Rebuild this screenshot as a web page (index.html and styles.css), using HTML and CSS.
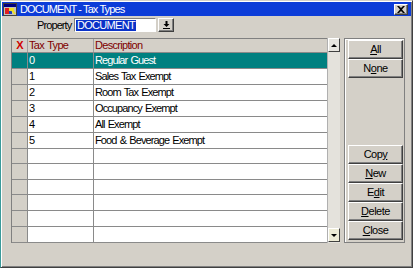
FILE: index.html
```html
<!DOCTYPE html>
<html>
<head>
<meta charset="utf-8">
<link rel="stylesheet" href="styles.css">
</head>
<body>
<div class="win">
  <div class="titlebar">
    <svg class="ticon" width="14" height="13" viewBox="0 0 14 13">
      <rect x="0.5" y="0.5" width="13" height="12" fill="#c0c0c0" stroke="#404040"/>
      <rect x="1" y="1" width="12" height="3" fill="#000080"/>
      <rect x="2" y="5" width="4" height="6" fill="#e02020"/>
      <rect x="6" y="5" width="5" height="3" fill="#f0e020"/>
      <rect x="6" y="8" width="3" height="3" fill="#2040c0"/>
      <path d="M8 6 L12 11" stroke="#f0e020" stroke-width="2"/>
    </svg>
    <span class="ttext">DOCUMENT - Tax Types</span>
    <span class="tclose"><svg width="8" height="7" viewBox="0 0 8 7"><path d="M0 0h2l2 2 2-2h2L5 3.5 8 7H6L4 5 2 7H0l3-3.5z" fill="#000"/></svg></span>
  </div>
  <div class="prop">
    <span class="plabel">Property</span>
    <span class="pinput"><span class="sel">DOCUMENT</span></span>
    <span class="pbtn"><svg width="7" height="8" viewBox="0 0 7 8"><path d="M2.5 0h2v3h2L3.5 6 0.5 3h2z" fill="#000"/><rect x="0" y="7" width="7" height="1" fill="#000"/></svg></span>
  </div>
  <div class="main">
    <div class="grid">
      <div class="row head"><div class="c0 xh">X</div><div class="c1">Tax Type</div><div class="c2">Description</div></div>
      <div class="row selrow"><div class="c0"></div><div class="c1">0</div><div class="c2">Regular Guest</div></div>
      <div class="row"><div class="c0"></div><div class="c1">1</div><div class="c2">Sales Tax Exempt</div></div>
      <div class="row"><div class="c0"></div><div class="c1">2</div><div class="c2">Room Tax Exempt</div></div>
      <div class="row"><div class="c0"></div><div class="c1">3</div><div class="c2">Occupancy Exempt</div></div>
      <div class="row"><div class="c0"></div><div class="c1">4</div><div class="c2">All Exempt</div></div>
      <div class="row"><div class="c0"></div><div class="c1">5</div><div class="c2">Food &amp; Beverage Exempt</div></div>
      <div class="row short"><div class="c0"></div><div class="c1"></div><div class="c2"></div></div>
      <div class="row"><div class="c0"></div><div class="c1"></div><div class="c2"></div></div>
      <div class="row short"><div class="c0"></div><div class="c1"></div><div class="c2"></div></div>
      <div class="row"><div class="c0"></div><div class="c1"></div><div class="c2"></div></div>
      <div class="row"><div class="c0"></div><div class="c1"></div><div class="c2"></div></div>
      <div class="row"><div class="c0"></div><div class="c1"></div><div class="c2"></div></div>
    </div>
    <div class="scroll">
      <div class="sbtn"><span class="arr up"></span></div>
      <div class="track"></div>
      <div class="sbtn dn"><span class="arr down"></span></div>
    </div>
    <div class="panel">
      <div class="btn"><u>A</u>ll</div>
      <div class="btn">N<u>o</u>ne</div>
      <div class="spacer"></div>
      <div class="btn">Cop<u>y</u></div>
      <div class="btn"><u>N</u>ew</div>
      <div class="btn">E<u>d</u>it</div>
      <div class="btn"><u>D</u>elete</div>
      <div class="btn"><u>C</u>lose</div>
    </div>
  </div>
</div>
</body>
</html>
```
FILE: styles.css
```css
* { box-sizing: border-box; }
html, body { margin: 0; padding: 0; }
body {
  font-family: "Liberation Sans", Arial, sans-serif;
  font-size: 11px;
  letter-spacing: -0.9px;
  word-spacing: 1px;
  color: #000;
  background: #d4d0c8;
}
.win {
  width: 413px;
  height: 268px;
  background: #d4d0c8;
  border: 1px solid;
  border-color: #d4d0c8 #404040 #404040 #3a9a9a;
  box-shadow: inset 1px 1px #fff, inset -1px -1px #808080;
  padding: 1px;
  display: flex;
  flex-direction: column;
}
.titlebar {
  height: 14px;
  background: #0c3cd8;
  color: #fff;
  display: flex;
  align-items: center;
  padding: 0 2px 0 1px;
}
.ticon { flex: none; }
.ttext { margin-left: 3px; flex: 1; font-size: 11px; letter-spacing: -0.9px; word-spacing: 0; }
.tclose {
  width: 14px;
  height: 11px;
  background: #d4d0c8;
  border: 1px solid;
  border-color: #fff #404040 #404040 #fff;
  box-shadow: inset -1px -1px #808080;
  display: flex;
  align-items: center;
  justify-content: center;
  margin-right: 1px;
}
.prop {
  margin-top: 2px;
  height: 14px;
  display: flex;
  align-items: center;
}
.plabel { margin-left: 35px; width: 37px; }
.pinput {
  width: 82px;
  height: 14px;
  background: #fff;
  border: 1px solid;
  border-color: #808080 #fff #fff #808080;
  padding-left: 1px;
  display: flex;
  align-items: center;
  line-height: 11px;
  letter-spacing: -0.7px;
}
.sel {
  background: #0a32c8;
  color: #fff;
  padding: 0 1px;
  height: 11px;
  display: inline-block;
}
.pbtn {
  width: 16px;
  height: 14px;
  margin-left: 2px;
  background: #d4d0c8;
  border: 1px solid;
  border-color: #fff #404040 #404040 #fff;
  box-shadow: inset -1px -1px #808080;
  display: flex;
  align-items: center;
  justify-content: center;
}
.main {
  margin-top: 6px;
  height: 205px;
  display: flex;
  padding-left: 9px;
}
.grid {
  width: 316px;
  border-left: 1px solid #808080;
  background: #fff;
  display: flex;
  flex-direction: column;
}
.row {
  display: grid;
  grid-template-columns: 16px 66px 1fr;
  height: 16px;
  border-bottom: 1px solid #8a8a8a;
  line-height: 15px;
}
.row.short { height: 15px; line-height: 14px; }
.row.head {
  height: 15px;
  border-top: 1px solid #808080;
  background: #d4d0c8;
  color: #800000;
  line-height: 13px;
  letter-spacing: -0.7px;
}
.c0 { background: #d4d0c8; border-right: 1px solid #8a8a8a; }
.c1 { border-right: 1px solid #8a8a8a; padding-left: 1px; white-space: nowrap; }
.c2 { padding-left: 1px; white-space: nowrap; }
.head .c0, .head .c1 { border-right-color: #a0a0a0; }
.xh { color: #d00000; font-weight: bold; text-align: center; }
.selrow, .selrow .c0 { background: #008080; color: #fff; }
.scroll {
  width: 13px;
  display: flex;
  flex-direction: column;
  background: #e4e2dc;
  border-left: 1px solid #b0b0b0;
  height: 205px;
}
.sbtn {
  height: 14px;
  background: #e8e6e0;
  border: 1px solid;
  border-color: #fff #404040 #404040 #fff;
  display: flex;
  align-items: center;
  justify-content: center;
}
.sbtn.dn { background: #eeecd6; }
.track { flex: 1; }
.arr { width: 0; height: 0; border-left: 3px solid transparent; border-right: 3px solid transparent; }
.arr.up { border-bottom: 3px solid #000; }
.arr.down { border-top: 3px solid #000; }
.scroll::after { content: ""; height: 1px; }
.panel {
  margin-left: 4px;
  width: 61px;
  height: 205px;
  border: 1px solid #808080;
  box-shadow: inset 1px 1px #fff;
  padding: 1px 1px 1px 3px;
  display: flex;
  flex-direction: column;
}
.spacer { flex: 1; }
.btn {
  width: 55px;
  height: 19px;
  flex: none;
  background: #d4d0c8;
  border: 1px solid;
  border-color: #fff #404040 #404040 #fff;
  box-shadow: inset -1px -1px #808080;
  display: flex;
  align-items: center;
  justify-content: center;
  padding-bottom: 1px;
  letter-spacing: -0.5px;
}
.btn:last-child { margin-bottom: 1px; }
```
